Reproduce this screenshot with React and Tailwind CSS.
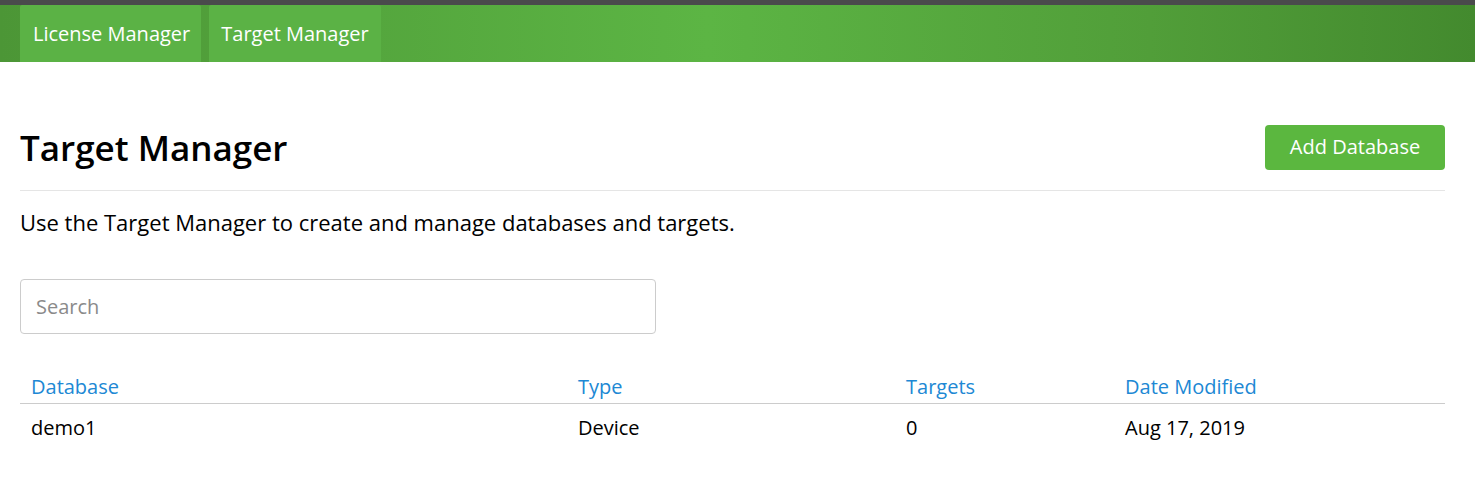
export default function App() {
  const font = { fontFamily: '"Open Sans", "Noto Sans", sans-serif' };
  return (
    <div className="w-[1475px] h-[499px] bg-white text-black" style={font}>
      <div className="h-[5px] bg-[#4a4a4c]" />
      <div className="h-[57px] bg-[linear-gradient(to_right,#4c9636_0%,#5cb544_48%,#519e39_78%,#438a2e_100%)] flex px-[20px] gap-[8px]">
        <div className="h-full pl-[13px] pr-[11px] flex items-center bg-[#5bb245] rounded-t-[2px] text-white text-[20px]">License Manager</div>
        <div className="h-full px-[12px] flex items-center bg-[#5bb245] rounded-t-[2px] text-white text-[20px]">Target Manager</div>
      </div>
      <div className="px-[20px] pr-[30px]">
        <div className="flex items-center justify-between mt-[64px] pb-[20px] border-b border-[#e5e5e5]">
          <h1 className="text-[35px] leading-[44px] font-semibold text-black">Target Manager</h1>
          <button className="h-[45px] w-[180px] bg-[#5bb73f] rounded-[4px] text-white text-[20px] -mt-[2px]">Add Database</button>
        </div>
        <p className="text-[22px] mt-[16px] leading-[30px]">Use the Target Manager to create and manage databases and targets.</p>
        <div className="mt-[42px] w-[636px] h-[55px] border border-[#cccccc] rounded-[4px] flex items-center px-[15px] text-[20px] text-[#8a8a8a]">Search</div>
        <div className="mt-[39px] text-[20px]">
          <div className="flex text-[#2088d4] border-b border-[#cccccc] h-[31px] items-start leading-[28px]">
            <div className="w-[547px] pl-[11px]">Database</div>
            <div className="w-[328px] pl-[11px]">Type</div>
            <div className="w-[219px] pl-[11px]">Targets</div>
            <div className="pl-[11px]">Date Modified</div>
          </div>
          <div className="flex pt-[10px] leading-[28px]">
            <div className="w-[547px] pl-[11px]">demo1</div>
            <div className="w-[328px] pl-[11px]">Device</div>
            <div className="w-[219px] pl-[11px]">0</div>
            <div className="pl-[11px]">Aug 17, 2019</div>
          </div>
        </div>
      </div>
    </div>
  );
}
